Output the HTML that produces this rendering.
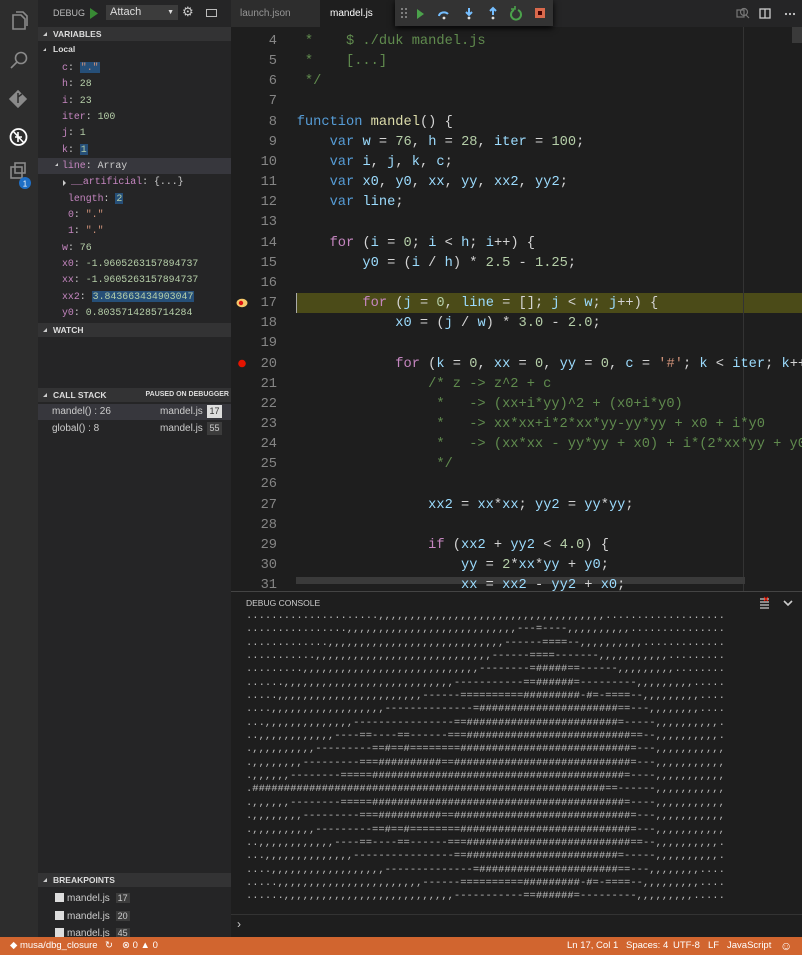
<!DOCTYPE html>
<html><head><meta charset="utf-8"><style>
*{margin:0;padding:0;box-sizing:border-box}
body{width:802px;height:955px;overflow:hidden;background:#1e1e1e;font-family:"Liberation Sans",sans-serif;position:relative;color:#ccc}
.abs{position:absolute}
.act{left:0;top:0;width:38px;height:937px;background:#2d2d2d}
.side{left:38px;top:0;width:193px;height:937px;background:#252526}
.sh{position:absolute;left:38px;width:193px;height:14px;background:#333334;font-size:8.5px;font-weight:bold;color:#ddd;line-height:14px;padding-left:15px}
.sh:before{content:"";position:absolute;left:5px;top:5px;border-left:4px solid transparent;border-bottom:4px solid #ccc}
.var{position:absolute;font-family:"Liberation Mono",monospace;font-size:9.9px;line-height:16.35px;white-space:pre;color:#ccc}
.n{color:#c586c0}.v{color:#b5cea8}.s{color:#ce9178}
.hl{background:#264f78;padding:0 1px}
.code{position:absolute;left:231px;top:27px;width:571px;height:564px;overflow:hidden}
.code pre{position:absolute;top:5px;left:0;font-family:"Liberation Mono",monospace;font-size:13.7px;line-height:20.15px;color:#d4d4d4}
.ln{position:absolute;left:0;width:46px;text-align:right;color:#858585}
.c{color:#608b4e}.k{color:#569cd6}.p{color:#c586c0}.i{color:#9cdcfe}.f{color:#dcdcaa}.num{color:#b5cea8}.st{color:#ce9178}
.con{position:absolute;left:246px;top:612px;width:556px;height:300px;overflow:hidden}
.con pre{margin-top:-2px;font-family:"Liberation Mono",monospace;font-size:10.5px;line-height:13.35px;color:#bbb}
.sb{left:0;top:937px;width:802px;height:18px;background:#d1652f;color:#fff;font-size:9.5px;line-height:18px}
</style></head><body>
<div class="abs act"></div>
<svg class="abs" style="left:0;top:0" width="38" height="200">
<g fill="none" stroke="#8a8a8a" stroke-width="1.6">
<path d="M13 15h8l4 4v10h-12z"/><path d="M16 12h7l4 4v10"/>
<circle cx="21" cy="58" r="5.5"/><path d="M17 62l-6 6"/>
<path d="M18 91l8 8-8 8-8-8z" fill="#8a8a8a"/>
<rect x="11" y="167" width="11" height="11"/><rect x="15" y="163" width="10" height="10"/>
</g>
<path d="M18 93v10M18 97l4 -3" stroke="#2d2d2d" stroke-width="1.5"/>
<circle cx="18.5" cy="137" r="8" fill="none" stroke="#fff" stroke-width="1.8"/>
<path d="M13 131l11 12M15 137h7M18 132v10" stroke="#fff" stroke-width="1.6"/>
<circle cx="25" cy="183" r="6" fill="#1f6fc5"/>
<text x="25" y="186.5" font-size="8" fill="#fff" text-anchor="middle" font-family="Liberation Sans">1</text>
</svg>
<div class="abs side"></div>
<div class="abs" style="left:53px;top:8px;font-size:9px;color:#bbb">DEBUG</div>
<svg class="abs" style="left:89px;top:8px" width="10" height="11"><path d="M1 0l8 5.5-8 5.5z" fill="#388a34"/></svg>
<div class="abs" style="left:106px;top:5px;width:72px;height:15px;background:#3c3c3c;font-size:11px;color:#ddd;padding-left:4px;line-height:15px">Attach<span style="position:absolute;right:4px;font-size:7px">▼</span></div>
<div class="abs" style="left:182px;top:4px;font-size:13px;color:#ccc">⚙</div>
<div class="abs" style="left:206px;top:9px;width:11px;height:8px;border:1px solid #bbb"></div>
<div class="sh" style="top:27px">VARIABLES</div>
<div class="abs" style="left:38px;top:44px;font-size:8.5px;font-weight:bold;padding-left:15px;color:#ddd">Local</div>
<div class="abs" style="left:43px;top:48px;border-left:3px solid transparent;border-bottom:3px solid #ccc"></div>
<div class="abs" style="left:38px;top:158px;width:193px;height:16px;background:#37373d"></div>
<div class="var" style="left:62px;top:60px"><span class="n">c</span>: <span class="hl s">"."</span>
<span class="n">h</span>: <span class="v">28</span>
<span class="n">i</span>: <span class="v">23</span>
<span class="n">iter</span>: <span class="v">100</span>
<span class="n">j</span>: <span class="v">1</span>
<span class="n">k</span>: <span class="hl v">1</span>
<span class="n">line</span>: Array
<span style="padding-left:9px" class="n">__artificial</span>: {...}
 <span class="n">length</span>: <span class="hl v">2</span>
 <span class="n">0</span>: <span class="s">"."</span>
 <span class="n">1</span>: <span class="s">"."</span>
<span class="n">w</span>: <span class="v">76</span>
<span class="n">x0</span>: <span class="v">-1.9605263157894737</span>
<span class="n">xx</span>: <span class="v">-1.9605263157894737</span>
<span class="n">xx2</span>: <span class="hl v">3.843663434903047</span>
<span class="n">y0</span>: <span class="v">0.8035714285714284</span></div>
<div class="abs" style="left:55px;top:163px;border-left:3px solid transparent;border-bottom:3px solid #ccc"></div>
<div class="abs" style="left:63px;top:180px;border-top:3px solid transparent;border-bottom:3px solid transparent;border-left:3px solid #ccc"></div>
<div class="sh" style="top:323px">WATCH</div>
<div class="sh" style="top:388px">CALL STACK<span style="position:absolute;right:2px;font-size:7px">PAUSED ON DEBUGGER</span></div>
<div class="abs" style="left:38px;top:404px;width:193px;height:16px;background:#37373d"></div>
<div class="abs" style="left:52px;top:406px;font-size:10px;color:#ccc">mandel() : 26</div>
<div class="abs" style="left:160px;top:406px;font-size:10px;color:#ccc">mandel.js</div>
<div class="abs" style="left:207px;top:405px;width:15px;height:13px;background:#ddd;color:#333;font-size:9px;text-align:center;line-height:13px">17</div>
<div class="abs" style="left:52px;top:423px;font-size:10px;color:#ccc">global() : 8</div>
<div class="abs" style="left:160px;top:423px;font-size:10px;color:#ccc">mandel.js</div>
<div class="abs" style="left:207px;top:422px;width:15px;height:13px;background:#3c3c3c;color:#ccc;font-size:9px;text-align:center;line-height:13px">55</div>
<div class="sh" style="top:873px">BREAKPOINTS</div>
<div class="abs" style="left:55px;top:890px;font-size:10px;line-height:16.5px;color:#ccc">
<div><span style="display:inline-block;width:9px;height:9px;background:#ddd;vertical-align:-1px;margin-right:3px"></span>mandel.js <span style="background:#3c3c3c;padding:0 2px;margin-left:3px;font-size:9px">17</span></div>
<div><span style="display:inline-block;width:9px;height:9px;background:#ddd;vertical-align:-1px;margin-right:3px"></span>mandel.js <span style="background:#3c3c3c;padding:0 2px;margin-left:3px;font-size:9px">20</span></div>
<div><span style="display:inline-block;width:9px;height:9px;background:#ddd;vertical-align:-1px;margin-right:3px"></span>mandel.js <span style="background:#3c3c3c;padding:0 2px;margin-left:3px;font-size:9px">45</span></div>
</div>
<div class="abs" style="left:231px;top:0;width:571px;height:27px;background:#252526"></div>
<div class="abs" style="left:231px;top:0;width:89px;height:27px;background:#2d2d2d;font-size:10px;color:#969696;line-height:27px;padding-left:9px">launch.json</div>
<div class="abs" style="left:320px;top:0;width:75px;height:27px;background:#1e1e1e;font-size:10px;color:#fff;line-height:27px;padding-left:10px">mandel.js</div>
<div class="abs" style="left:395px;top:0;width:158px;height:26px;background:#333;box-shadow:0 2px 6px #000"></div>
<svg class="abs" style="left:395px;top:0" width="158" height="26">
<g fill="#999"><circle cx="7" cy="9" r="1"/><circle cx="11" cy="9" r="1"/><circle cx="7" cy="13" r="1"/><circle cx="11" cy="13" r="1"/><circle cx="7" cy="17" r="1"/><circle cx="11" cy="17" r="1"/></g>
<path d="M22 9l7 5-7 5z" fill="#4ba24b"/>
<path d="M44 16a5 4 0 0 1 9-2" stroke="#75beff" stroke-width="2" fill="none"/><circle cx="49" cy="18" r="1.4" fill="#ddd"/>
<path d="M74 8v6M71 12l3 3 3-3" stroke="#75beff" stroke-width="2" fill="none"/><circle cx="74" cy="18" r="1.4" fill="#ddd"/>
<path d="M98 15v-6M95 11l3-3 3 3" stroke="#75beff" stroke-width="2" fill="none"/><circle cx="98" cy="18" r="1.4" fill="#ddd"/>
<path d="M119 10a5 5 0 1 0 4 0" stroke="#4ba24b" stroke-width="2" fill="none"/><path d="M116 9h4v-3" stroke="#4ba24b" stroke-width="1.6" fill="none"/>
<rect x="140" y="8" width="10" height="10" fill="#d9694c"/><rect x="143" y="11" width="4" height="4" fill="#400"/>
</svg>
<svg class="abs" style="left:733px;top:5px" width="69" height="18">
<g fill="none" stroke="#777" stroke-width="1.2"><rect x="4" y="5" width="7" height="7"/><circle cx="11" cy="7" r="3.5"/><path d="M13 10l3 3"/></g>
<g fill="none" stroke="#ccc" stroke-width="1.3"><rect x="27" y="4" width="10" height="9"/><path d="M32 4v9"/></g>
<g fill="#ccc"><circle cx="53" cy="9" r="1.1"/><circle cx="57" cy="9" r="1.1"/><circle cx="61" cy="9" r="1.1"/></g>
</svg>
<div class="code">
<div class="abs" style="left:65px;top:266px;width:506px;height:20px;background:#4b4b18;border-left:1px solid #aaa"></div>
<div class="abs" style="left:512px;top:0;width:1px;height:564px;background:#333"></div>
<div class="abs" style="left:561px;top:0;width:10px;height:16px;background:#3a3a3a"></div>
<div class="abs" style="left:65px;top:550px;width:449px;height:7px;background:#3a3a3a"></div>
<svg class="abs" style="left:4px;top:268px" width="14" height="80"><ellipse cx="7" cy="8" rx="5.5" ry="4.2" fill="#f5c86a"/><circle cx="6" cy="8" r="2.2" fill="#d11"/><circle cx="7" cy="68.5" r="3.8" fill="#e51400"/></svg>
<pre><span class="ln"> 4</span>        <span class="c"> *    $ ./duk mandel.js</span>
<span class="ln"> 5</span>        <span class="c"> *    [...]</span>
<span class="ln"> 6</span>        <span class="c"> */</span>
<span class="ln"> 7</span>
<span class="ln"> 8</span>        <span class="k">function</span> <span class="f">mandel</span>() {
<span class="ln"> 9</span>            <span class="k">var</span> <span class="i">w</span> = <span class="num">76</span>, <span class="i">h</span> = <span class="num">28</span>, <span class="i">iter</span> = <span class="num">100</span>;
<span class="ln">10</span>            <span class="k">var</span> <span class="i">i</span>, <span class="i">j</span>, <span class="i">k</span>, <span class="i">c</span>;
<span class="ln">11</span>            <span class="k">var</span> <span class="i">x0</span>, <span class="i">y0</span>, <span class="i">xx</span>, <span class="i">yy</span>, <span class="i">xx2</span>, <span class="i">yy2</span>;
<span class="ln">12</span>            <span class="k">var</span> <span class="i">line</span>;
<span class="ln">13</span>
<span class="ln">14</span>            <span class="p">for</span> (<span class="i">i</span> = <span class="num">0</span>; <span class="i">i</span> &lt; <span class="i">h</span>; <span class="i">i</span>++) {
<span class="ln">15</span>                <span class="i">y0</span> = (<span class="i">i</span> / <span class="i">h</span>) * <span class="num">2.5</span> - <span class="num">1.25</span>;
<span class="ln">16</span>
<span class="ln">17</span>                <span class="p">for</span> (<span class="i">j</span> = <span class="num">0</span>, <span class="i">line</span> = []; <span class="i">j</span> &lt; <span class="i">w</span>; <span class="i">j</span>++) {
<span class="ln">18</span>                    <span class="i">x0</span> = (<span class="i">j</span> / <span class="i">w</span>) * <span class="num">3.0</span> - <span class="num">2.0</span>;
<span class="ln">19</span>
<span class="ln">20</span>                    <span class="p">for</span> (<span class="i">k</span> = <span class="num">0</span>, <span class="i">xx</span> = <span class="num">0</span>, <span class="i">yy</span> = <span class="num">0</span>, <span class="i">c</span> = <span class="st">'#'</span>; <span class="i">k</span> &lt; <span class="i">iter</span>; <span class="i">k</span>++) {
<span class="ln">21</span>                        <span class="c">/* z -&gt; z^2 + c</span>
<span class="ln">22</span>                        <span class="c"> *   -&gt; (xx+i*yy)^2 + (x0+i*y0)</span>
<span class="ln">23</span>                        <span class="c"> *   -&gt; xx*xx+i*2*xx*yy-yy*yy + x0 + i*y0</span>
<span class="ln">24</span>                        <span class="c"> *   -&gt; (xx*xx - yy*yy + x0) + i*(2*xx*yy + y0)</span>
<span class="ln">25</span>                        <span class="c"> */</span>
<span class="ln">26</span>
<span class="ln">27</span>                        <span class="i">xx2</span> = <span class="i">xx</span>*<span class="i">xx</span>; <span class="i">yy2</span> = <span class="i">yy</span>*<span class="i">yy</span>;
<span class="ln">28</span>
<span class="ln">29</span>                        <span class="p">if</span> (<span class="i">xx2</span> + <span class="i">yy2</span> &lt; <span class="num">4.0</span>) {
<span class="ln">30</span>                            <span class="i">yy</span> = <span class="num">2</span>*<span class="i">xx</span>*<span class="i">yy</span> + <span class="i">y0</span>;
<span class="ln">31</span>                            <span class="i">xx</span> = <span class="i">xx2</span> - <span class="i">yy2</span> + <span class="i">x0</span>;</pre>
</div>
<div class="abs" style="left:231px;top:591px;width:571px;height:1px;background:#444"></div>
<div class="abs" style="left:246px;top:598px;font-size:8.5px;color:#ccc">DEBUG CONSOLE</div>
<svg class="abs" style="left:758px;top:596px" width="40" height="14"><g stroke="#ccc" stroke-width="1.2"><path d="M2 3h9M2 6h9M2 9h9M2 12h9"/><path d="M6 1l4 4M10 1l-4 4" stroke="#e51400"/><path d="M26 5l4 4 4-4" fill="none" stroke-width="1.6"/></g></svg>
<div class="con"><pre>.....................,,,,,,,,,,,,,,,,,,,,,,,,,,,,,,,,,,,,...................
................,,,,,,,,,,,,,,,,,,,,,,,,,,,---=----,,,,,,,,,,...............
.............,,,,,,,,,,,,,,,,,,,,,,,,,,,,------====--,,,,,,,,,,.............
...........,,,,,,,,,,,,,,,,,,,,,,,,,,,,------====-------,,,,,,,,,,,.........
.........,,,,,,,,,,,,,,,,,,,,,,,,,,,,--------=#####==------,,,,,,,,,........
......,,,,,,,,,,,,,,,,,,,,,,,,,,,-----------==######=---------,,,,,,,,,.....
.....,,,,,,,,,,,,,,,,,,,,,,,------==========#########-#=-====--,,,,,,,,,....
....,,,,,,,,,,,,,,,,,,--------------=######################==---,,,,,,,,....
...,,,,,,,,,,,,,,----------------==########################=-----,,,,,,,,,,.
..,,,,,,,,,,,,----==----==------===##########################==--,,,,,,,,,,.
.,,,,,,,,,,---------==#==#========###########################=---,,,,,,,,,,,
.,,,,,,,,---------===##########==############################=---,,,,,,,,,,,
.,,,,,,--------=====########################################=----,,,,,,,,,,,
.########################################################==------,,,,,,,,,,,
.,,,,,,--------=====########################################=----,,,,,,,,,,,
.,,,,,,,,---------===##########==############################=---,,,,,,,,,,,
.,,,,,,,,,,---------==#==#========###########################=---,,,,,,,,,,,
..,,,,,,,,,,,,----==----==------===##########################==--,,,,,,,,,,.
...,,,,,,,,,,,,,,----------------==########################=-----,,,,,,,,,,.
....,,,,,,,,,,,,,,,,,,--------------=######################==---,,,,,,,,....
.....,,,,,,,,,,,,,,,,,,,,,,,------==========#########-#=-====--,,,,,,,,,....
......,,,,,,,,,,,,,,,,,,,,,,,,,,,-----------==######=---------,,,,,,,,,.....</pre></div>
<div class="abs" style="left:231px;top:914px;width:571px;height:1px;background:#333"></div>
<div class="abs" style="left:237px;top:917px;font-size:12px;color:#ccc">›</div>
<div class="abs sb">
<span class="abs" style="left:10px">◆ musa/dbg_closure</span>
<span class="abs" style="left:105px">↻</span>
<span class="abs" style="left:122px">⊗ 0 ▲ 0</span>
<span class="abs" style="left:567px">Ln 17, Col 1</span>
<span class="abs" style="left:626px">Spaces: 4</span>
<span class="abs" style="left:673px">UTF-8</span>
<span class="abs" style="left:708px">LF</span>
<span class="abs" style="left:727px">JavaScript</span>
<span class="abs" style="left:780px;font-size:12px">☺</span>
</div>
</body></html>
